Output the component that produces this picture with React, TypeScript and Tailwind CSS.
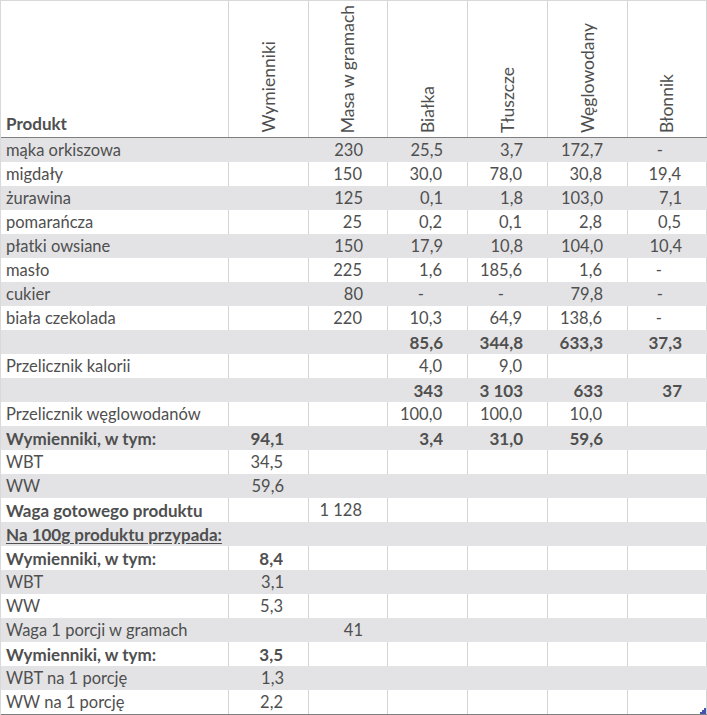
const cols = ['w-[228px]', 'w-[80px]', 'w-[79px]', 'w-[80px]', 'w-[80px]', 'w-[80px]', 'w-[79px]']

const headers = ['Wymienniki', 'Masa w gramach', 'Białka', 'Tłuszcze', 'Węglowodany', 'Błonnik']

// label, wymienniki, masa, białka, tłuszcze, węglowodany, błonnik
const rows: { cells: string[]; bold?: boolean; boldLabel?: boolean; underline?: boolean }[] = [
  { cells: ['mąka orkiszowa', '', '230', '25,5', '3,7', '172,7', '-'] },
  { cells: ['migdały', '', '150', '30,0', '78,0', '30,8', '19,4'] },
  { cells: ['żurawina', '', '125', '0,1', '1,8', '103,0', '7,1'] },
  { cells: ['pomarańcza', '', '25', '0,2', '0,1', '2,8', '0,5'] },
  { cells: ['płatki owsiane', '', '150', '17,9', '10,8', '104,0', '10,4'] },
  { cells: ['masło', '', '225', '1,6', '185,6', '1,6', '-'] },
  { cells: ['cukier', '', '80', '-', '-', '79,8', '-'] },
  { cells: ['biała czekolada', '', '220', '10,3', '64,9', '138,6', '-'] },
  { cells: ['', '', '', '85,6', '344,8', '633,3', '37,3'], bold: true },
  { cells: ['Przelicznik kalorii', '', '', '4,0', '9,0', '', ''] },
  { cells: ['', '', '', '343', '3 103', '633', '37'], bold: true },
  { cells: ['Przelicznik węglowodanów', '', '', '100,0', '100,0', '10,0', ''] },
  { cells: ['Wymienniki, w tym:', '94,1', '', '3,4', '31,0', '59,6', ''], bold: true },
  { cells: ['WBT', '34,5', '', '', '', '', ''] },
  { cells: ['WW', '59,6', '', '', '', '', ''] },
  { cells: ['Waga gotowego produktu', '', '1 128', '', '', '', ''], boldLabel: true },
  { cells: ['Na 100g produktu przypada:', '', '', '', '', '', ''], boldLabel: true, underline: true },
  { cells: ['Wymienniki, w tym:', '8,4', '', '', '', '', ''], bold: true },
  { cells: ['WBT', '3,1', '', '', '', '', ''] },
  { cells: ['WW', '5,3', '', '', '', '', ''] },
  { cells: ['Waga 1 porcji w gramach', '', '41', '', '', '', ''] },
  { cells: ['Wymienniki, w tym:', '3,5', '', '', '', '', ''], bold: true },
  { cells: ['WBT na 1 porcję', '1,3', '', '', '', '', ''] },
  { cells: ['WW na 1 porcję', '2,2', '', '', '', '', ''] },
]

export default function App() {
  return (
    <div
      className="relative w-[707px] h-[715px] overflow-hidden bg-white text-[#4f4f4f] text-[16.5px]"
      style={{ fontFamily: 'Lato, "Liberation Sans", sans-serif' }}
    >
      <div className="border-l border-t border-[#d9d9d9]">
        {/* header */}
        <div className="flex h-[137px] border-b border-[#7f7f7f]">
          <div className={`${cols[0]} shrink-0 border-r border-[#d4d4d4] flex items-end pl-[5px] pb-[1px] font-bold text-[17px]`}>
            Produkt
          </div>
          {headers.map((h, i) => (
            <div
              key={h}
              className={`${cols[i + 1]} shrink-0 border-r border-[#d4d4d4] flex items-end justify-center pb-[4px]`}
            >
              <span className="[writing-mode:vertical-rl] rotate-180 leading-none whitespace-nowrap text-[17.5px]">
                {h}
              </span>
            </div>
          ))}
        </div>

        {/* body */}
        {rows.map((r, ri) => {
          const gray = ri % 2 === 0
          return (
            <div key={ri} className={`flex h-[24px] ${gray ? 'bg-[#e3e3e5]' : 'bg-white'}`}>
              {r.cells.map((c, ci) => {
                const isLabel = ci === 0
                const bold = r.bold || (isLabel && r.boldLabel)
                const dash = c === '-'
                return (
                  <div
                    key={ci}
                    className={[
                      cols[ci],
                      'shrink-0 flex items-end pb-[2px] leading-[19px] whitespace-nowrap',
                      gray ? '' : 'border-r border-[#d4d4d4]',
                      isLabel ? 'pl-[5px]' : dash ? 'justify-end pr-[44px]' : 'justify-end pr-[25px]',
                      bold ? 'font-bold text-[17px]' : '',
                      isLabel && r.underline ? 'underline underline-offset-2' : '',
                    ].join(' ')}
                  >
                    {c}
                  </div>
                )
              })}
            </div>
          )
        })}
        <div className="h-px bg-[#7f7f7f]" />
      </div>

      {/* table resize handle */}
      <svg className="absolute right-[1px] bottom-[1px]" width="6" height="6" viewBox="0 0 6 6">
        <polygon points="6,0 6,6 0,6 0,4 2,4 2,2 4,2 4,0" fill="#4054b2" />
      </svg>
    </div>
  )
}
